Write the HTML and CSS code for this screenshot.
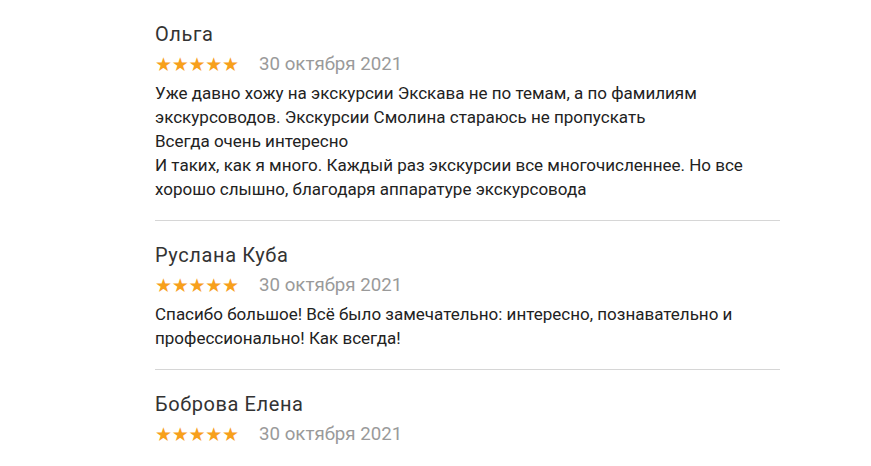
FILE: index.html
```html
<!DOCTYPE html>
<html lang="ru">
<head>
<meta charset="utf-8">
<link rel="stylesheet" href="styles.css">
</head>
<body>
<div class="reviews">
  <div class="review">
    <div class="name">Ольга</div>
    <div class="meta"><span class="stars">★★★★★</span><span class="date">30 октября 2021</span></div>
    <div class="text">Уже давно хожу на экскурсии Экскава не по темам, а по фамилиям экскурсоводов. Экскурсии Смолина стараюсь не пропускать<br>Всегда очень интересно<br>И таких, как я много. Каждый раз экскурсии все многочисленнее. Но все хорошо слышно, благодаря аппаратуре экскурсовода</div>
  </div>
  <div class="review">
    <div class="name">Руслана Куба</div>
    <div class="meta"><span class="stars">★★★★★</span><span class="date">30 октября 2021</span></div>
    <div class="text">Спасибо большое! Всё было замечательно: интересно, познавательно и профессионально! Как всегда!</div>
  </div>
  <div class="review">
    <div class="name">Боброва Елена</div>
    <div class="meta"><span class="stars">★★★★★</span><span class="date">30 октября 2021</span></div>
  </div>
</div>
</body>
</html>
```
FILE: styles.css
```css
html, body {
  margin: 0;
  padding: 0;
  background: #fff;
}
body {
  font-family: Roboto, "Noto Sans", sans-serif;
  color: #222;
  overflow: hidden;
}
.reviews {
  margin-left: 155px;
  width: 625px;
  margin-top: -1px;
}
.review {
  border-top: 1px solid #d6d6d6;
  padding: 22px 0 19px;
}
.name {
  font-size: 20px;
  line-height: 24px;
  color: #333;
  letter-spacing: 0.6px;
}
.meta {
  display: flex;
  align-items: center;
  margin-top: 6px;
  height: 24px;
}
.stars {
  color: #f7a01c;
  font-size: 19px;
  letter-spacing: -0.3px;
  width: 104px;
  font-family: "DejaVu Sans", sans-serif;
}
.date {
  font-size: 18.7px;
  color: #9a9a9a;
}
.text {
  margin-top: 5px;
  font-size: 17px;
  line-height: 24px;
  color: #222;
}
```
